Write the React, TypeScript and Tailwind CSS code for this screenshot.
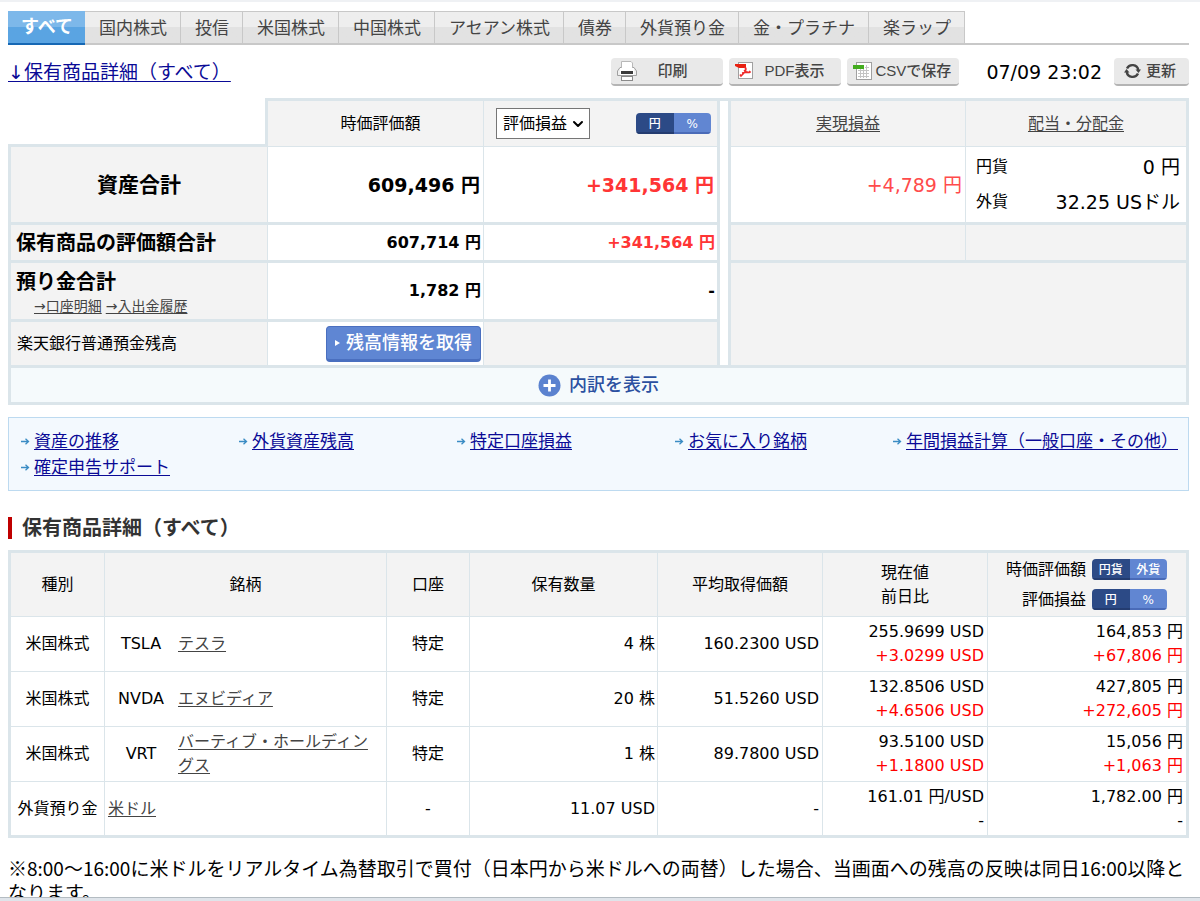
import React, { useState } from 'react';
import { ChevronDown } from 'lucide-react';

const tabs = [
  'すべて',
  '国内株式',
  '投信',
  '米国株式',
  '中国株式',
  'アセアン株式',
  '債券',
  '外貨預り金',
  '金・プラチナ',
  '楽ラップ'
];

const shortcuts = [
  '資産の推移',
  '外貨資産残高',
  '特定口座損益',
  'お気に入り銘柄',
  '年間損益計算（一般口座・その他）',
  '確定申告サポート'
];

const holdings = [
  {
    type: '米国株式',
    ticker: 'TSLA',
    name: 'テスラ',
    account: '特定',
    quantity: '4 株',
    cost: '160.2300 USD',
    price: '255.9699 USD',
    change: '+3.0299 USD',
    value: '164,853 円',
    profit: '+67,806 円'
  },
  {
    type: '米国株式',
    ticker: 'NVDA',
    name: 'エヌビディア',
    account: '特定',
    quantity: '20 株',
    cost: '51.5260 USD',
    price: '132.8506 USD',
    change: '+4.6506 USD',
    value: '427,805 円',
    profit: '+272,605 円'
  },
  {
    type: '米国株式',
    ticker: 'VRT',
    name: 'バーティブ・ホールディングス',
    account: '特定',
    quantity: '1 株',
    cost: '89.7800 USD',
    price: '93.5100 USD',
    change: '+1.1800 USD',
    value: '15,056 円',
    profit: '+1,063 円'
  },
  {
    type: '外貨預り金',
    ticker: '',
    name: '米ドル',
    account: '-',
    quantity: '11.07 USD',
    cost: '-',
    price: '161.01 円/USD',
    change: '-',
    value: '1,782.00 円',
    profit: '-'
  }
];

function PrinterIcon() {
  return (
    <svg width="20" height="20" viewBox="0 0 20 20" fill="none" className="shrink-0">
      <path d="M3 6.500H17L19.500 10V14.500H0.500V10Z" fill="#f0f0f0" stroke="#a0a0a0" />
      <path d="M4.500 9V0.500H14L15.500 2V9Z" fill="#fff" stroke="#b8b8b8" />
      <rect x="3" y="7" width="14" height="7" fill="#fff" />
      <rect x="4" y="10" width="12" height="3" fill="#3c3c3c" />
      <rect x="4.500" y="15.500" width="11" height="4" fill="#fff" stroke="#8a8a8a" />
    </svg>
  );
}

function PdfIcon() {
  return (
    <svg width="18" height="18" viewBox="0 0 18 18" fill="none" className="shrink-0">
      <rect x="3.500" y="0.500" width="14" height="16" fill="#fff" stroke="#a0a0a0" />
      <path d="M0 2H11V6H4L0 4Z" fill="#e82010" />
      <path d="M9 5.500C12 5 11 9 9 11L6 14L5 12.500M9 8C11 10 13 11.500 15 10L14 9M7 11L13 10" stroke="#ee2a2a" strokeWidth="1.600" />
    </svg>
  );
}

function CsvIcon() {
  return (
    <svg width="20" height="19" viewBox="0 0 20 19" fill="none" className="shrink-0">
      <rect x="3.500" y="0.500" width="15" height="17" fill="#fff" stroke="#a0a0a0" />
      <path d="M5 8.500H16M5 11.500H16M5 14.500H16M7.500 7V16M10.500 7V16M13.500 3V16M12 5.500H16" stroke="#c4c4c4" />
      <rect x="0" y="3" width="11" height="4" fill="#43ac1f" />
    </svg>
  );
}

function RefreshIcon() {
  return (
    <svg width="17" height="16" viewBox="0 0 17 16" fill="none" className="shrink-0">
      <path d="M3 5.500A6 6 0 0 1 14.300 7M14 10.500A6 6 0 0 1 2.700 9" stroke="#444" strokeWidth="2.400" />
      <path d="M11.500 6.500H17L14.500 10Z" fill="#444" />
      <path d="M0 9.500H5.500L2.500 6Z" fill="#444" />
    </svg>
  );
}

function SmallArrow() {
  return (
    <svg width="9" height="7" viewBox="0 0 9 7" fill="none" className="shrink-0">
      <path d="M0 3.500H7.500M4.500 0.800L7.500 3.500L4.500 6.200" stroke="#3a8cc4" strokeWidth="1.300" />
    </svg>
  );
}

function ToolButton({ icon, label, className }: { icon: React.ReactNode; label: string; className: string }) {
  return (
    <button
      className={`flex h-7 items-center rounded border-b-2 border-[#b4b4b4] bg-[#e9e9e9] font-['Liberation_Sans','Noto_Sans_CJK_JP',sans-serif] text-[15px] font-medium text-[#444] ${className}`}
    >
      {icon}
      <span className="flex-1 text-center">{label}</span>
    </button>
  );
}

function Toggle({ left, right }: { left: string; right: string }) {
  const [active, setActive] = useState(left);

  return (
    <div className="flex h-[21px] w-[75px] overflow-hidden rounded text-[12px] font-medium text-white">
      {[left, right].map((label) => (
        <button
          key={label}
          onClick={() => setActive(label)}
          className={`flex-1 pt-[2px] leading-[19px] ${
            active === label
              ? 'bg-[#2c4a86] shadow-[inset_0_-2px_#243c70]'
              : 'bg-[#6186d2] shadow-[inset_0_-2px_#4a6bb8]'
          }`}
        >
          {label}
        </button>
      ))}
    </div>
  );
}

function Summary() {
  return (
    <table className="mt-3 w-full table-fixed border-separate border-spacing-0 [&_td]:border-[#dbe5ea] [&_th]:border-[#dbe5ea]">
      <colgroup>
        <col className="w-[260px]" />
        <col className="w-[216px]" />
        <col className="w-[236px]" />
        <col className="w-2" />
        <col className="w-[238px]" />
        <col />
      </colgroup>
      <tbody>
        <tr className="h-[49px]">
          <td className="border-r-3 border-b-3"></td>
          <th className="border-t-3 border-r border-b bg-[#f3f3f3] pl-[10px] font-normal">時価評価額</th>
          <th className="border-t-3 border-r-3 border-b bg-[#f3f3f3] font-normal">
            <div className="flex items-center justify-between pr-[6px] pl-3">
              <div className="relative">
                <select
                  aria-label="損益の種類"
                  className="h-[31px] w-[94px] appearance-none border border-[#767676] bg-white pl-[6px] text-[16px] text-black"
                >
                  <option>評価損益</option>
                </select>
                <ChevronDown
                  className="pointer-events-none absolute top-2 right-1 h-4 w-4"
                  strokeWidth={3}
                />
              </div>
              <Toggle left="円" right="%" />
            </div>
          </th>
          <td rowSpan={5} className="border-t-3"></td>
          <th className="border-t-3 border-r border-b border-l-3 bg-[#f3f3f3] font-normal">
            <a href="#realized" className="text-[#444] underline underline-offset-2">実現損益</a>
          </th>
          <th className="border-t-3 border-r-3 border-b bg-[#f3f3f3] font-normal">
            <a href="#dividend" className="text-[#444] underline underline-offset-2">配当・分配金</a>
          </th>
        </tr>
        <tr className="h-[78px]">
          <th className="border-r border-b-3 border-l-3 bg-[#f3f3f3] text-[21px] font-bold">資産合計</th>
          <td className="border-r border-b-3 pr-[3px] text-right text-[19px] font-bold">609,496 円</td>
          <td className="border-r-3 border-b-3 pr-[3px] text-right text-[19px] font-bold text-[#ff3535]">
            +341,564 円
          </td>
          <td className="border-r border-b-3 border-l-3 pr-[3px] text-right text-[19px] text-[#ff4b4b]">
            +4,789 円
          </td>
          <td className="border-r-3 border-b-3 pr-[6px] pl-[10px]">
            <div className="flex h-[35px] items-center justify-between">
              <span>円貨</span>
              <span className="text-[19px]">0 円</span>
            </div>
            <div className="flex h-[35px] items-center justify-between">
              <span>外貨</span>
              <span className="text-[19px]">32.25 USドル</span>
            </div>
          </td>
        </tr>
        <tr className="h-[38px]">
          <th className="border-r border-b-3 border-l-3 bg-[#f3f3f3] pl-[5px] text-left text-[20px] font-bold">
            保有商品の評価額合計
          </th>
          <td className="border-r border-b-3 pr-[2px] text-right font-bold">607,714 円</td>
          <td className="border-r-3 border-b-3 pr-[2px] text-right font-bold text-[#ff3535]">+341,564 円</td>
          <td className="border-r border-b-3 border-l-3 bg-[#f3f3f3]"></td>
          <td className="border-r-3 border-b-3 bg-[#f3f3f3]"></td>
        </tr>
        <tr className="h-[59px]">
          <th className="border-r border-b-3 border-l-3 bg-[#f3f3f3] pt-[6px] pl-[5px] text-left text-[20px] font-bold">
            預り金合計
            <div className="flex gap-1 pl-[18px] text-[14px] leading-6 font-normal text-[#444]">
              <a href="#account" className="underline underline-offset-2">→口座明細</a>
              <a href="#history" className="underline underline-offset-2">→入出金履歴</a>
            </div>
          </th>
          <td className="border-r border-b-3 pr-[2px] text-right font-bold">1,782 円</td>
          <td className="border-r-3 border-b-3 pr-[2px] text-right font-bold">-</td>
          <td rowSpan={2} colSpan={2} className="border-r-3 border-l-3 bg-[#f3f3f3]"></td>
        </tr>
        <tr className="h-[43px]">
          <th className="border-r border-l-3 bg-[#f3f3f3] pl-[6px] text-left font-normal">楽天銀行普通預金残高</th>
          <td className="border-r pr-[2px]">
            <button className="ml-auto flex h-9 w-[155px] items-center gap-[6px] rounded border border-b-3 border-[#4a6fbf] bg-[#5f86d3] pl-2 text-[18px] font-medium text-white">
              <svg width="5" height="6" viewBox="0 0 5 6">
                <path d="M0 0L5 3L0 6Z" fill="#fff" />
              </svg>
              残高情報を取得
            </button>
          </td>
          <td className="border-r-3 bg-[#f3f3f3]"></td>
        </tr>
        <tr className="h-10">
          <td colSpan={6} className="border-3 bg-[#f5fafc]">
            <button className="mx-auto flex items-center gap-2 text-[18px] font-medium text-[#2b50a0]">
              <svg width="23" height="23" viewBox="0 0 23 23">
                <circle cx="11.500" cy="11.500" r="11" fill="#5b82cf" />
                <path d="M11.500 5.500V17.500M5.500 11.500H17.500" stroke="#fff" strokeWidth="2.800" />
              </svg>
              内訳を表示
            </button>
          </td>
        </tr>
      </tbody>
    </table>
  );
}

function Holdings() {
  return (
    <table className="mt-[11px] w-full table-fixed border-separate border-spacing-0 border-3 border-[#dbe5ea] [&_td]:border-[#dbe5ea] [&_th]:border-[#dbe5ea]">
      <colgroup>
        <col className="w-[94px]" />
        <col className="w-[282px]" />
        <col className="w-[83px]" />
        <col className="w-[188px]" />
        <col className="w-[165px]" />
        <col className="w-[165px]" />
        <col />
      </colgroup>
      <thead>
        <tr className="h-16 bg-[#f3f3f3] [&>th]:border-b [&>th]:font-normal [&>th:not(:last-child)]:border-r">
          <th>種別</th>
          <th>銘柄</th>
          <th>口座</th>
          <th>保有数量</th>
          <th>平均取得価額</th>
          <th>
            現在値
            <br />
            前日比
          </th>
          <th>
            <div className="flex items-center justify-end gap-[6px] pr-[19px] leading-[30px]">
              時価評価額
              <Toggle left="円貨" right="外貨" />
            </div>
            <div className="flex items-center justify-end gap-[6px] pr-[19px] leading-[30px]">
              評価損益
              <Toggle left="円" right="%" />
            </div>
          </th>
        </tr>
      </thead>
      <tbody>
        {holdings.map((item) => {
          const color = item.change === '-' ? '' : 'text-[#ff0000]';

          return (
            <tr
              key={item.name}
              className="h-[55px] last:h-[53px] [&:not(:last-child)>td]:border-b [&>td:not(:last-child)]:border-r"
            >
              <td className="text-center">{item.type}</td>
              <td className="px-[3px]">
                <div className="flex items-center gap-1">
                  {item.ticker && <span className="w-[66px] shrink-0 text-center">{item.ticker}</span>}
                  <a href="#detail" className="text-[#444] underline underline-offset-2">{item.name}</a>
                </div>
              </td>
              <td className="text-center">{item.account}</td>
              <td className="pr-[2px] text-right">{item.quantity}</td>
              <td className="pr-[3px] text-right">{item.cost}</td>
              <td className="pr-[3px] text-right">
                <div>{item.price}</div>
                <div className={color}>{item.change}</div>
              </td>
              <td className="pr-[3px] text-right">
                <div>{item.value}</div>
                <div className={color}>{item.profit}</div>
              </td>
            </tr>
          );
        })}
      </tbody>
    </table>
  );
}

export default function App() {
  const [activeTab, setActiveTab] = useState('すべて');

  return (
    <div
      lang="ja"
      className="h-screen overflow-hidden border-t-2 border-[#eff1f4] bg-white pr-[11px] pl-2 font-['DejaVu_Sans','Noto_Sans_CJK_JP',sans-serif] text-[16px] leading-6 text-black"
    >
      <nav className="mt-[9px] flex h-[34px] border-b-2 border-[#c8c8c8] text-[17px]">
        {tabs.map((tab) => (
          <button
            key={tab}
            onClick={() => setActiveTab(tab)}
            className={
              tab === activeTab
                ? '-mb-[2px] border-b-2 border-[#1668b4] bg-linear-to-b from-[#7db8ea] from-50% to-[#5aa4e2] to-50% pr-3 pl-[13px] text-[18px] font-bold text-white'
                : 'border-t border-r border-[#c8c8c8] bg-linear-to-b from-[#eeeeee] from-50% to-[#e2e2e2] to-50% pr-[13px] pl-[14px] text-[#444]'
            }
          >
            {tab}
          </button>
        ))}
      </nav>

      <div className="mt-[13px] flex h-7 items-center justify-between">
        <a href="#holdings" className="text-[19px] text-[#0a0a96] underline underline-offset-2">
          ↓保有商品詳細（すべて）
        </a>
        <div className="flex items-center gap-[6px]">
          <ToolButton icon={<PrinterIcon />} label="印刷" className="w-28 pr-4 pl-[6px]" />
          <ToolButton icon={<PdfIcon />} label="PDF表示" className="w-28 px-[6px]" />
          <ToolButton icon={<CsvIcon />} label="CSVで保存" className="w-28 px-[6px]" />
          <span className="mr-[6px] ml-[21px] text-[19px]">07/09 23:02</span>
          <ToolButton icon={<RefreshIcon />} label="更新" className="w-[75px] pr-2 pl-[10px]" />
        </div>
      </div>

      <Summary />

      <ul className="mt-3 flex flex-wrap border border-[#bddaf0] bg-[#f3f9fe] py-[10px] pl-3 text-[17px] leading-[26px]">
        {shortcuts.map((label) => (
          <li key={label} className="flex min-w-[218px] items-center gap-1">
            <SmallArrow />
            <a href="#shortcut" className="text-[#0a0a96] underline underline-offset-2">{label}</a>
          </li>
        ))}
      </ul>

      <h2
        id="holdings"
        className="mt-[26px] border-l-4 border-[#bf0000] pl-[10px] text-[20px] leading-[22px] font-bold text-[#333]"
      >
        保有商品詳細（すべて）
      </h2>

      <Holdings />

      <p className="mt-[18px] font-['Noto_Sans_CJK_JP',sans-serif] text-[19px]">
        ※8:00～16:00に米ドルをリアルタイム為替取引で買付（日本円から米ドルへの両替）した場合、当画面への残高の反映は同日16:00以降となります。
      </p>

      <div className="fixed inset-x-0 bottom-0 h-1 border-t border-[#b4bcc2] bg-[#dfe4ea]"></div>
    </div>
  );
}
